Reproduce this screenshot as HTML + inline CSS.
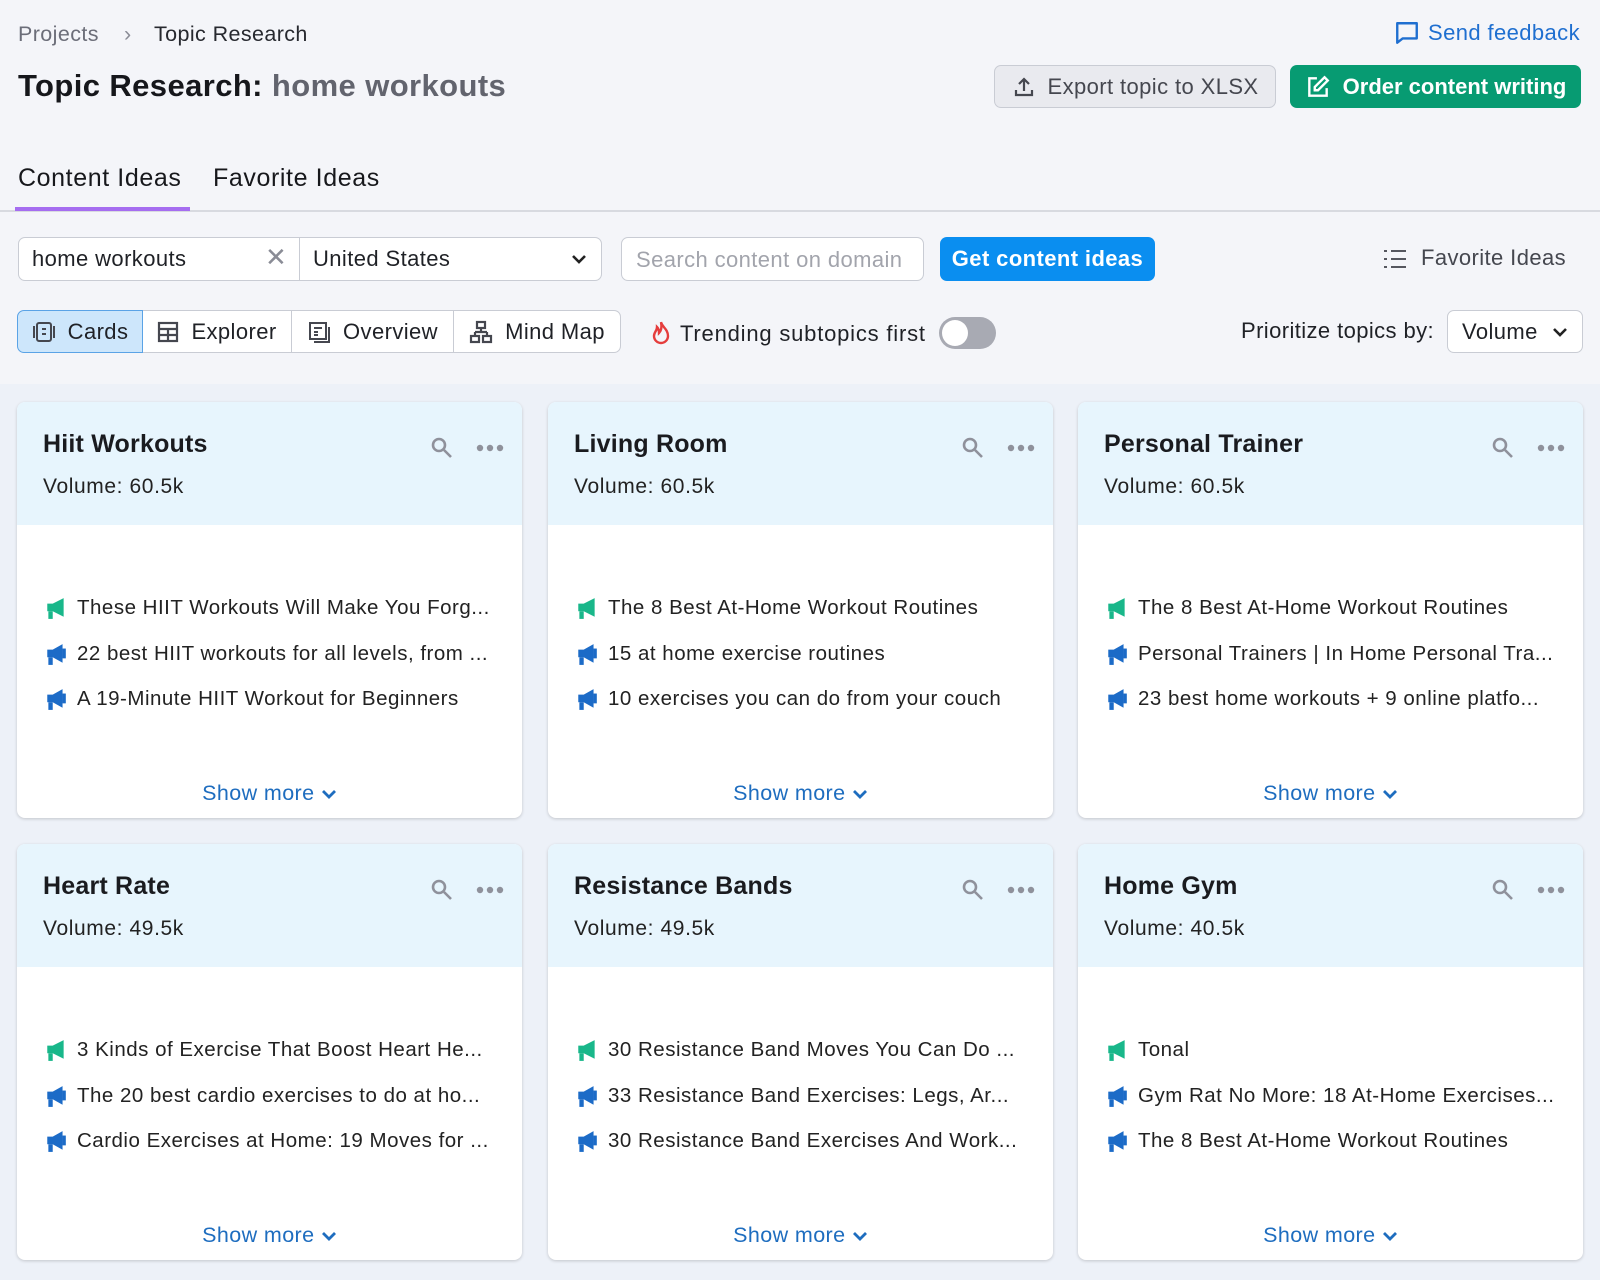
<!DOCTYPE html>
<html><head><meta charset="utf-8"><style>
*{box-sizing:border-box;margin:0;padding:0}
body{width:1600px;height:1280px;background:#f4f5f9;font-family:"Liberation Sans",sans-serif;color:#1f2126;position:relative;overflow:hidden;letter-spacing:0.4px}
.a{position:absolute;white-space:nowrap}
.crumb{top:22px;font-size:21.5px;color:#6c6e79}
.btn{position:absolute;border-radius:7px;font-size:22px;display:flex;align-items:center;justify-content:center;gap:12px}
.area{position:absolute;left:0;top:384px;width:1600px;height:896px;background:#edf1f8}
.card{position:absolute;width:505px;height:416px;background:#fff;border-radius:8px;box-shadow:0 1px 3px rgba(0,0,0,.18);overflow:hidden}
.card .hd{height:123px;background:#e7f5fd;padding:28px 26px 0}
.card h3{font-size:25px;font-weight:bold;color:#1a1b1f;letter-spacing:0.2px}
.card .vol{font-size:21px;margin-top:16px;color:#222;letter-spacing:0.6px}
.card .ic{position:absolute;top:34px;right:18px;display:flex;gap:22px;align-items:center}
.card ul{list-style:none;position:absolute;top:194px;left:28px}
.card li{font-size:20.5px;height:45.5px;display:flex;gap:10px;color:#222;align-items:flex-start;letter-spacing:0.5px}
.card .sm{position:absolute;left:0;right:0;bottom:12px;text-align:center;color:#1e6dbf;font-size:21.5px}
.seg{position:absolute;top:310px;height:43px;display:flex;align-items:center;gap:12px;font-size:22px;justify-content:center;border:1px solid #c9ccd4;background:#fff}
</style></head><body>
<div class="a crumb" style="left:18px">Projects</div>
<div class="a crumb" style="left:124px;color:#8a8c96">›</div>
<div class="a crumb" style="left:154px;color:#27292f">Topic Research</div>
<div class="a" style="left:18px;top:68px;font-size:31px;font-weight:bold;color:#16171b">Topic Research: <span style="color:#62646e">home workouts</span></div>
<div class="a" style="left:1394px;top:20px;font-size:22px;color:#1f6fd0;display:flex;gap:8px;align-items:center"><svg width="26" height="26" viewBox="0 0 24 24"><path d="M3 3h18v14H8l-5 4z" fill="none" stroke="#1f6fd0" stroke-width="2.2" stroke-linejoin="round"/></svg>Send feedback</div>
<div class="btn" style="left:994px;top:65px;width:282px;height:43px;background:#e9eaef;border:1px solid #c9ccd4;color:#45474f"><svg width="24" height="24" viewBox="0 0 24 24" fill="none" stroke="#45474f" stroke-width="2.2"><path d="M12 16V4M7 9l5-5 5 5M4 15v5h16v-5"/></svg>Export topic to XLSX</div>
<div class="btn" style="left:1290px;top:65px;width:291px;height:43px;background:#079b72;color:#fff;font-weight:bold;letter-spacing:0"><svg width="26" height="26" viewBox="0 0 24 24" fill="none" stroke="#fff" stroke-width="2.2"><path d="M11 4H4v16h16v-7M18 3l3 3-9 9H9v-3z"/></svg>Order content writing</div>
<div class="a" style="left:18px;top:164px;font-size:25px;color:#17181c;letter-spacing:0.6px">Content Ideas</div>
<div class="a" style="left:213px;top:164px;font-size:25px;color:#17181c;letter-spacing:0.6px">Favorite Ideas</div>
<div class="a" style="left:0;top:210px;width:1600px;height:2px;background:#d8dae0"></div>
<div class="a" style="left:15px;top:207px;width:175px;height:4px;background:#a56df0"></div>
<div class="a" style="left:18px;top:237px;width:584px;height:44px;background:#fff;border:1px solid #c9ccd4;border-radius:7px"></div>
<div class="a" style="left:299px;top:238px;width:1px;height:42px;background:#c9ccd4"></div>
<div class="a" style="left:32px;top:246px;font-size:22px">home workouts</div>
<div class="a" style="left:265px;top:242px;font-size:26px;color:#8a8c96">✕</div>
<div class="a" style="left:313px;top:246px;font-size:22px">United States</div>
<svg class="a" style="left:570px;top:251px" width="18" height="16" viewBox="0 0 18 16"><path d="M3 5l6 6 6-6" fill="none" stroke="#222" stroke-width="2.6"/></svg>
<div class="a" style="left:621px;top:237px;width:303px;height:44px;background:#fff;border:1px solid #c9ccd4;border-radius:7px;padding:9px 14px;font-size:22px;color:#a2a4ac">Search content on domain</div>
<div class="btn" style="left:940px;top:237px;width:215px;height:44px;background:#0a8ef0;color:#fff;font-weight:bold">Get content ideas</div>
<svg class="a" style="left:1383px;top:248px" width="24" height="22" viewBox="0 0 24 22" stroke="#55575f" stroke-width="2"><path d="M1 3h3M8 3h15M1 11h3M8 11h15M1 19h3M8 19h15"/></svg>
<div class="a" style="left:1421px;top:245px;font-size:22px;color:#45474f">Favorite Ideas</div>
<div class="seg" style="left:17px;width:126px;background:#cde6fb;border-color:#5aa3e6;border-radius:7px 0 0 7px"><svg width="24" height="24" viewBox="0 0 24 24" fill="none" stroke="#45474f" stroke-width="2"><rect x="5" y="3" width="14" height="18" rx="2"/><path d="M2 6v12M22 6v12M10 9h4M10 14h4"/></svg>Cards</div>
<div class="seg" style="left:143px;width:149px;border-left:none"><svg width="22" height="22" viewBox="0 0 22 22" fill="none" stroke="#45474f" stroke-width="2.2"><rect x="2" y="2" width="18" height="18"/><path d="M2 8h18M2 14h18M11 8v12"/></svg>Explorer</div>
<div class="seg" style="left:292px;width:162px;border-left:none"><svg width="24" height="24" viewBox="0 0 24 24" fill="none" stroke="#45474f" stroke-width="2"><rect x="3" y="3" width="16" height="16"/><path d="M22 7v15H7M7 8h8M7 12h4M7 15h4"/></svg>Overview</div>
<div class="seg" style="left:454px;width:167px;border-left:none;border-radius:0 7px 7px 0"><svg width="24" height="24" viewBox="0 0 24 24" fill="none" stroke="#45474f" stroke-width="2.2"><rect x="8" y="2" width="8" height="6"/><rect x="2" y="16" width="8" height="6"/><rect x="14" y="16" width="8" height="6"/><path d="M12 8v4M6 12h12M6 12v4M18 12v4"/></svg>Mind Map</div>
<svg class="a" style="left:650px;top:320px" width="22" height="26" viewBox="0 0 22 26"><path d="M11 2c1 5 7 7 7 14a7 7 0 01-14 0c0-4 3-5 3-9 2 2 2 4 2 6 2-2 3-6 2-11z" fill="none" stroke="#e53d3d" stroke-width="2.4"/></svg>
<div class="a" style="left:680px;top:321px;font-size:22px;letter-spacing:0.8px">Trending subtopics first</div>
<div class="a" style="left:939px;top:317px;width:57px;height:32px;border-radius:16px;background:#a8aab3"><div style="position:absolute;left:3px;top:3px;width:26px;height:26px;border-radius:50%;background:#fff"></div></div>
<div class="a" style="left:1241px;top:318px;font-size:22px">Prioritize topics by:</div>
<div class="a" style="left:1447px;top:310px;width:136px;height:43px;background:#fff;border:1px solid #c9ccd4;border-radius:7px;padding:8px 14px;font-size:22px">Volume</div>
<svg class="a" style="left:1551px;top:324px" width="18" height="16" viewBox="0 0 18 16"><path d="M3 5l6 6 6-6" fill="none" stroke="#222" stroke-width="2.6"/></svg>
<div class="area"></div>
<svg width="0" height="0" style="position:absolute"><defs>
<symbol id="mg" viewBox="0 0 20 22"><path d="M2 7h5l10-5v17L7 14H2z" fill="#19b78a"/><rect x="3" y="14" width="4" height="7" fill="#19b78a"/></symbol>
<symbol id="mb" viewBox="0 0 20 22"><path d="M2 7h5l9-5v17L7 14H2z" fill="#1c6bc7"/><rect x="3" y="14" width="4" height="7" fill="#1c6bc7"/><rect x="16" y="6" width="3" height="9" fill="#1c6bc7"/></symbol>
</defs></svg>
<div id="cards"></div>
<script>
var d=[["Hiit Workouts","60.5k",["These HIIT Workouts Will Make You Forg...","22 best HIIT workouts for all levels, from ...","A 19-Minute HIIT Workout for Beginners"]],
["Living Room","60.5k",["The 8 Best At-Home Workout Routines","15 at home exercise routines","10 exercises you can do from your couch"]],
["Personal Trainer","60.5k",["The 8 Best At-Home Workout Routines","Personal Trainers | In Home Personal Tra...","23 best home workouts + 9 online platfo..."]],
["Heart Rate","49.5k",["3 Kinds of Exercise That Boost Heart He...","The 20 best cardio exercises to do at ho...","Cardio Exercises at Home: 19 Moves for ..."]],
["Resistance Bands","49.5k",["30 Resistance Band Moves You Can Do ...","33 Resistance Band Exercises: Legs, Ar...","30 Resistance Band Exercises And Work..."]],
["Home Gym","40.5k",["Tonal","Gym Rat No More: 18 At-Home Exercises...","The 8 Best At-Home Workout Routines"]]];
var xs=[17,548,1078],ys=[402,844],h="";
d.forEach(function(c,i){
h+='<div class="card" style="left:'+xs[i%3]+'px;top:'+ys[Math.floor(i/3)]+'px"><div class="hd"><h3>'+c[0]+'</h3><div class="vol">Volume: '+c[1]+'</div></div>'+
'<div class="ic"><svg width="24" height="24" viewBox="0 0 24 24" fill="none" stroke="#8f919b" stroke-width="2.6"><circle cx="9" cy="9" r="6"/><path d="M14 14l7 7"/></svg><svg width="28" height="8" viewBox="0 0 28 8" fill="#8f919b"><circle cx="4" cy="4" r="3.2"/><circle cx="14" cy="4" r="3.2"/><circle cx="24" cy="4" r="3.2"/></svg></div><ul>';
c[2].forEach(function(t,j){h+='<li><svg width="22" height="24" style="margin-top:0"><use href="#'+(j?'mb':'mg')+'"/></svg>'+t+'</li>'});
h+='</ul><div class="sm">Show more <svg width="16" height="12" viewBox="0 0 16 12"><path d="M2 3l6 6 6-6" fill="none" stroke="#1e6dbf" stroke-width="2.8"/></svg></div></div>';});
document.getElementById('cards').innerHTML=h;
</script>
</body></html>
